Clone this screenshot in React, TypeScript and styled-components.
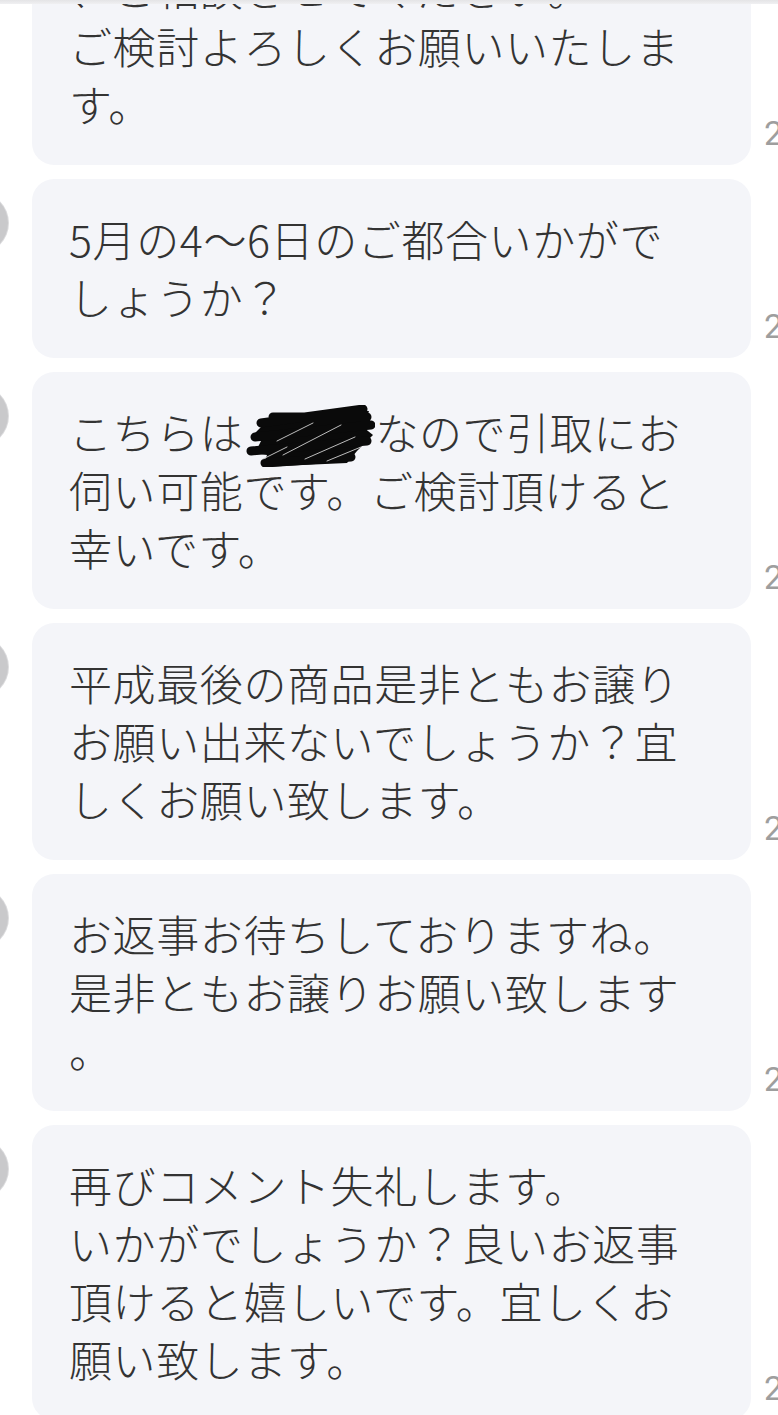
import React from 'react';
import styled, { createGlobalStyle } from 'styled-components';

const GlobalStyle = createGlobalStyle`
  html, body {
    margin: 0;
    padding: 0;
    background: #ffffff;
    overflow: hidden;
  }
  body {
    font-family: "Noto Sans CJK JP", "Noto Sans", sans-serif;
  }
`;

const Screen = styled.div`
  position: relative;
  width: 778px;
  height: 1415px;
  overflow: hidden;
  background: #ffffff;
`;

const TopShade = styled.div`
  position: absolute;
  top: 0;
  left: 0;
  right: 0;
  height: 4px;
  background: linear-gradient(#e4e4e6, #f0f0f2);
  z-index: 2;
`;

const Thread = styled.div`
  display: flex;
  flex-direction: column;
  gap: 14px;
  margin-top: -72px;
`;

const Row = styled.div`
  display: flex;
  align-items: stretch;
`;

const Avatar = styled.div<{ $hidden?: boolean }>`
  flex: none;
  width: 60px;
  height: 60px;
  margin-left: -52px;
  margin-top: 14px;
  margin-right: 24px;
  border-radius: 50%;
  background: #c9c9cb;
  box-shadow: 0 0 0 1px #dcdcde;
  visibility: ${(p) => (p.$hidden ? 'hidden' : 'visible')};
`;

const Bubble = styled.div`
  flex: none;
  width: 719px;
  box-sizing: border-box;
  padding: 30px 20px 33px 37px;
  border-radius: 22px;
  background: #f4f5f9;
  color: #333333;
  font-size: 43px;
  font-weight: 300;
  letter-spacing: 0.6px;
  line-height: 58px;
  white-space: nowrap;
`;

const Line = styled.div``;

const Time = styled.div`
  flex: none;
  align-self: flex-end;
  margin-left: 13px;
  margin-bottom: 12px;
  font-family: "Roboto", "Noto Sans", sans-serif;
  font-size: 34px;
  line-height: 40px;
  color: #9e9e9e;
`;

const Scribble = styled.svg`
  display: inline-block;
  vertical-align: middle;
  width: 132px;
  height: 62px;
  margin: -14px 0 -10px 0;
`;

const Redaction = () => (
  <Scribble viewBox="0 0 132 62">
    <path
      d="M20 20 C50 8 90 4 126 6 L120 22 L130 30 L114 46 L104 58 L60 60 L20 62 L24 50 L12 48 L18 36 L10 30 Z"
      fill="#0a0a0a"
    />
    <path
      d="M18 18 L120 4 M12 32 L128 20 M8 46 L124 36 M22 58 L108 52 M30 12 L124 12"
      fill="none"
      stroke="#0a0a0a"
      strokeWidth="9"
      strokeLinecap="round"
    />
    <path
      d="M34 36 L70 18 M40 50 L98 20 M62 54 L112 32 M20 54 L44 42 M84 56 L118 42"
      fill="none"
      stroke="#d0d0d0"
      strokeWidth="0.9"
      strokeLinecap="round"
    />
  </Scribble>
);

type Message = { lines: React.ReactNode[]; avatar: boolean };

const messages: Message[] = [
  {
    avatar: false,
    lines: ['、ご相談させてください。', 'ご検討よろしくお願いいたしま', 'す。'],
  },
  { avatar: true, lines: ['5月の4〜6日のご都合いかがで', 'しょうか？'] },
  {
    avatar: true,
    lines: [
      <>
        こちらは
        <Redaction />
        なので引取にお
      </>,
      '伺い可能です。ご検討頂けると',
      '幸いです。',
    ],
  },
  {
    avatar: true,
    lines: ['平成最後の商品是非ともお譲り', 'お願い出来ないでしょうか？宜', 'しくお願い致します。'],
  },
  {
    avatar: true,
    lines: ['お返事お待ちしておりますね。', '是非ともお譲りお願い致します', '。'],
  },
  {
    avatar: true,
    lines: ['再びコメント失礼します。', 'いかがでしょうか？良いお返事', '頂けると嬉しいです。宜しくお', '願い致します。'],
  },
];

export default function App() {
  return (
    <Screen>
      <GlobalStyle />
      <TopShade />
      <Thread>
        {messages.map((m, i) => (
          <Row key={i}>
            <Avatar $hidden={!m.avatar} />
            <Bubble>
              {m.lines.map((l, j) => (
                <Line key={j}>{l}</Line>
              ))}
            </Bubble>
            <Time>2</Time>
          </Row>
        ))}
      </Thread>
    </Screen>
  );
}
